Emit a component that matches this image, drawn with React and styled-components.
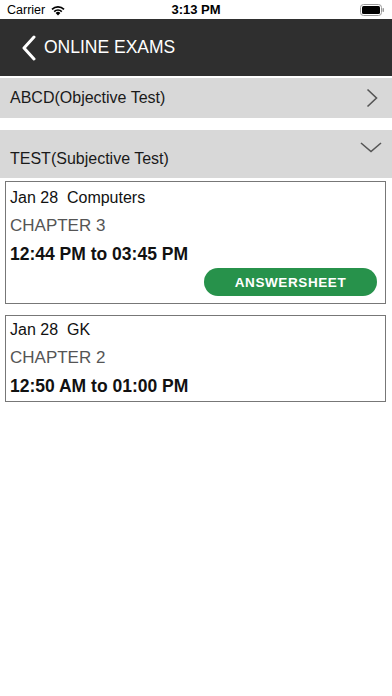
import React from "react";
import styled, { createGlobalStyle } from "styled-components";

const Global = createGlobalStyle`
  html, body { margin: 0; padding: 0; background: #fff; }
  body { font-family: "Liberation Sans", Arial, sans-serif; }
  * { box-sizing: border-box; }
`;

const Screen = styled.div`
  width: 392px;
  height: 696px;
  background: #fff;
  display: flex;
  flex-direction: column;
`;

const StatusBar = styled.div`
  height: 19px;
  display: grid;
  grid-template-columns: 1fr auto 1fr;
  align-items: center;
  padding: 0 7px;
  font-size: 12.5px;
  color: #000;
`;

const Left = styled.div`
  display: flex;
  align-items: center;
  gap: 5px;
`;

const Clock = styled.div`
  font-weight: 700;
  font-size: 13px;
`;

const Right = styled.div`
  display: flex;
  justify-content: flex-end;
  align-items: center;
`;

const Header = styled.div`
  height: 57px;
  background: #2f2f2f;
  display: flex;
  align-items: center;
  padding-left: 22px;
  gap: 8px;
  color: #fff;
  font-size: 17.5px;
  margin-bottom: 2px;
`;

const Section = styled.div`
  background: #d8d8d8;
  height: ${(p) => p.$h}px;
  display: flex;
  align-items: ${(p) => (p.$bottom ? "flex-end" : "center")};
  justify-content: space-between;
  padding: ${(p) => (p.$bottom ? "0 10px 10px 10px" : "0 14px 0 10px")};
  margin-top: ${(p) => p.$mt || 0}px;
  font-size: 16px;
  color: #1a1a1a;
  position: relative;
`;

const DownIcon = styled.svg`
  position: absolute;
  right: 10px;
  top: 12px;
`;

const Card = styled.div`
  margin: ${(p) => p.$mt}px 6px 0 5px;
  border: 1px solid #777;
  padding: ${(p) => p.$pt}px 10px ${(p) => p.$pb}px 4px;
  display: flex;
  flex-direction: column;
`;

const Line = styled.div`
  height: 28px;
  display: flex;
  align-items: center;
  font-size: ${(p) => p.$size || 16}px;
  font-weight: ${(p) => (p.$bold ? 700 : 400)};
  color: ${(p) => p.$color || "#111"};
  white-space: pre;
`;

const ButtonRow = styled.div`
  display: flex;
  justify-content: flex-end;
`;

const Button = styled.div`
  width: 173px;
  height: 28px;
  border-radius: 14px;
  background: #27924b;
  color: #fff;
  font-weight: 700;
  font-size: 13.5px;
  letter-spacing: 0.6px;
  display: flex;
  align-items: center;
  justify-content: center;
  margin-right: -2px;
`;

export default function App() {
  return (
    <>
      <Global />
      <Screen>
        <StatusBar>
          <Left>
            <span>Carrier</span>
            <svg width="16" height="12" viewBox="0 0 16 12">
              <path d="M8 11.5 L5.6 9 A3.4 3.4 0 0 1 10.4 9 Z" fill="#000" />
              <path d="M3.6 7 A6.2 6.2 0 0 1 12.4 7 L11.2 8.2 A4.5 4.5 0 0 0 4.8 8.2 Z" fill="#000" />
              <path d="M1.4 4.8 A9.3 9.3 0 0 1 14.6 4.8 L13.4 6 A7.6 7.6 0 0 0 2.6 6 Z" fill="#000" />
            </svg>
          </Left>
          <Clock>3:13 PM</Clock>
          <Right>
            <svg width="25" height="12" viewBox="0 0 25 12">
              <rect x="0.5" y="0.5" width="21" height="11" rx="3" fill="none" stroke="#999" />
              <rect x="2" y="2" width="18" height="8" rx="1.5" fill="#000" />
              <rect x="22.5" y="4" width="1.5" height="4" rx="0.7" fill="#999" />
            </svg>
          </Right>
        </StatusBar>
        <Header>
          <svg width="14" height="26" viewBox="0 0 14 26">
            <path d="M12 2 L2 13 L12 24" fill="none" stroke="#fff" strokeWidth="3" strokeLinecap="round" strokeLinejoin="round" />
          </svg>
          <span>ONLINE EXAMS</span>
        </Header>
        <Section $h={40}>
          <span>ABCD(Objective Test)</span>
          <svg width="12" height="20" viewBox="0 0 12 20">
            <path d="M1.5 1.5 L10.5 10 L1.5 18.5" fill="none" stroke="#555" strokeWidth="1.6" />
          </svg>
        </Section>
        <Section $h={48} $mt={12} $bottom>
          <span>TEST(Subjective Test)</span>
          <DownIcon width="22" height="11" viewBox="0 0 22 11">
            <path d="M1 1 L11 9.5 L21 1" fill="none" stroke="#555" strokeWidth="1.6" />
          </DownIcon>
        </Section>
        <Card $mt={3} $pt={2} $pb={7}>
          <Line>Jan 28  Computers</Line>
          <Line $color="#555" $size={17}>CHAPTER 3</Line>
          <Line $bold $size={17.5}>12:44 PM to 03:45 PM</Line>
          <ButtonRow>
            <Button>ANSWERSHEET</Button>
          </ButtonRow>
        </Card>
        <Card $mt={11} $pt={0} $pb={1}>
          <Line>Jan 28  GK</Line>
          <Line $color="#555" $size={17}>CHAPTER 2</Line>
          <Line $bold $size={17.5}>12:50 AM to 01:00 PM</Line>
        </Card>
      </Screen>
    </>
  );
}
